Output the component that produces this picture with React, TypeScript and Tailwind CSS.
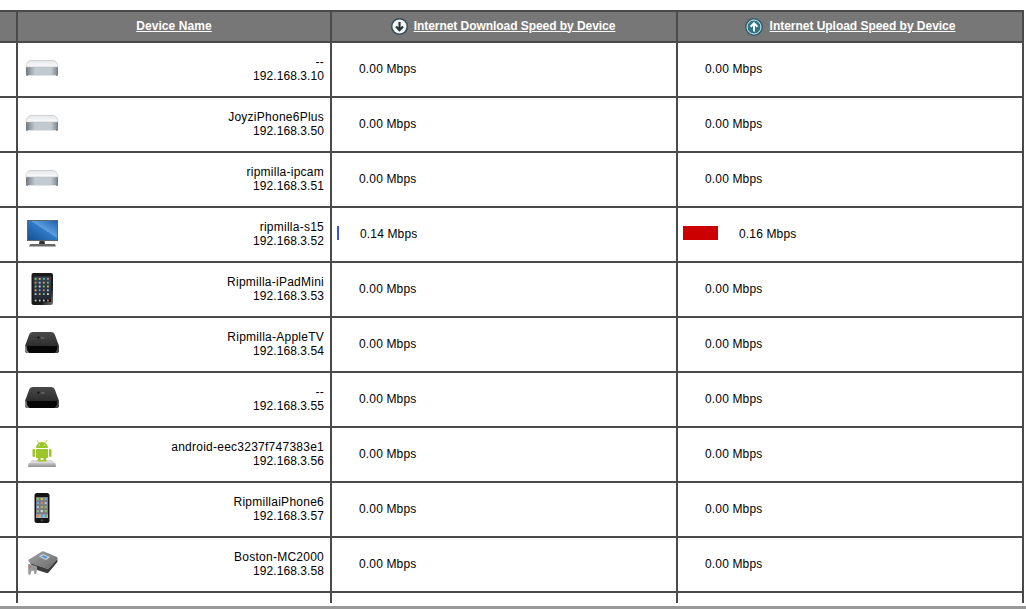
type IconName = "mini" | "monitor" | "ipad" | "appletv" | "android" | "iphone" | "n64";

type Device = {
  icon: IconName;
  name: string;
  ip: string;
  down: string;
  up: string;
  downBar?: boolean;
  upBar?: boolean;
};

const devices: Device[] = [
  { icon: "mini", name: "--", ip: "192.168.3.10", down: "0.00 Mbps", up: "0.00 Mbps" },
  { icon: "mini", name: "JoyziPhone6Plus", ip: "192.168.3.50", down: "0.00 Mbps", up: "0.00 Mbps" },
  { icon: "mini", name: "ripmilla-ipcam", ip: "192.168.3.51", down: "0.00 Mbps", up: "0.00 Mbps" },
  { icon: "monitor", name: "ripmilla-s15", ip: "192.168.3.52", down: "0.14 Mbps", up: "0.16 Mbps", downBar: true, upBar: true },
  { icon: "ipad", name: "Ripmilla-iPadMini", ip: "192.168.3.53", down: "0.00 Mbps", up: "0.00 Mbps" },
  { icon: "appletv", name: "Ripmilla-AppleTV", ip: "192.168.3.54", down: "0.00 Mbps", up: "0.00 Mbps" },
  { icon: "appletv", name: "--", ip: "192.168.3.55", down: "0.00 Mbps", up: "0.00 Mbps" },
  { icon: "android", name: "android-eec3237f747383e1", ip: "192.168.3.56", down: "0.00 Mbps", up: "0.00 Mbps" },
  { icon: "iphone", name: "RipmillaiPhone6", ip: "192.168.3.57", down: "0.00 Mbps", up: "0.00 Mbps" },
  { icon: "n64", name: "Boston-MC2000", ip: "192.168.3.58", down: "0.00 Mbps", up: "0.00 Mbps" },
];

const appDots = ["#7cc45c", "#dcb850", "#6aaae8", "#d8806a", "#9fc8e0", "#c8a860", "#80b880", "#d8d8d8"];

function DeviceIcon({ name }: { name: IconName }) {
  return (
    <svg width="40" height="40" viewBox="0 0 40 40" aria-hidden="true">
      <defs>
        <linearGradient id="miniSide" x1="0" x2="1" y1="0" y2="0">
          <stop offset="0" stopColor="#6f767d" />
          <stop offset="0.12" stopColor="#949ca4" />
          <stop offset="0.28" stopColor="#c2cad1" />
          <stop offset="0.78" stopColor="#c2cad1" />
          <stop offset="0.92" stopColor="#949ca4" />
          <stop offset="1" stopColor="#70777e" />
        </linearGradient>
        <linearGradient id="miniTop" x1="0" x2="0" y1="0" y2="1">
          <stop offset="0" stopColor="#e4e6e9" />
          <stop offset="1" stopColor="#fbfbfc" />
        </linearGradient>
        <linearGradient id="screenBlue" x1="0" x2="1" y1="1" y2="0">
          <stop offset="0" stopColor="#164f92" />
          <stop offset="0.55" stopColor="#2f7cc8" />
          <stop offset="0.56" stopColor="#5d9fdf" />
          <stop offset="1" stopColor="#1f63ad" />
        </linearGradient>
        <linearGradient id="tvTop" x1="0" x2="0" y1="0" y2="1">
          <stop offset="0" stopColor="#4a4a4a" />
          <stop offset="1" stopColor="#1e1e1e" />
        </linearGradient>
        <linearGradient id="padEdge" x1="0" x2="1" y1="0" y2="1">
          <stop offset="0" stopColor="#1a1a1a" />
          <stop offset="0.7" stopColor="#1a1a1a" />
          <stop offset="1" stopColor="#777" />
        </linearGradient>
        <linearGradient id="padScreen" x1="0" x2="0" y1="0" y2="1">
          <stop offset="0" stopColor="#3b4652" />
          <stop offset="1" stopColor="#1d2530" />
        </linearGradient>
        <linearGradient id="dock" x1="0" x2="0" y1="0" y2="1">
          <stop offset="0" stopColor="#c8c8c8" />
          <stop offset="1" stopColor="#8e8e8e" />
        </linearGradient>
        <linearGradient id="n64Top" x1="0" x2="1" y1="0" y2="1">
          <stop offset="0" stopColor="#a4a4a4" />
          <stop offset="1" stopColor="#686868" />
        </linearGradient>
      </defs>

      {name === "mini" && (
        <g>
          <path d="M4 17 L4 24.5 Q4 26 5.5 26 L34.5 26 Q36 26 36 24.5 L36 17 Z" fill="url(#miniSide)" />
          <path d="M4 17 C4.3 13 6 10.5 9 10.5 L31 10.5 C34 10.5 35.7 13 36 17 Z" fill="url(#miniTop)" stroke="#b8bcc0" strokeWidth="0.6" />
          <rect x="6" y="25" width="28" height="1" fill="#dfe2e5" />
        </g>
      )}

      {name === "monitor" && (
        <g>
          <rect x="5" y="5" width="31" height="21" fill="#5c6670" />
          <rect x="6" y="6" width="29" height="19" fill="url(#screenBlue)" />
          <path d="M17.5 26 L22.5 26 L23 29 L17 29 Z" fill="#333" />
          <path d="M8 29 L33 29 L34 31.5 L7 31.5 Z" fill="#6a6a6a" />
        </g>
      )}

      {name === "ipad" && (
        <g>
          <rect x="9.5" y="3" width="21.5" height="32" rx="2" fill="url(#padEdge)" />
          <rect x="11.5" y="6.5" width="17.5" height="25.5" fill="url(#padScreen)" />
          {[0, 1, 2, 3, 4].map((row) =>
            [0, 1, 2, 3].map((col) => (
              <rect key={`${row}-${col}`} x={12.7 + col * 4.1} y={8 + row * 3.8} width="1.8" height="1.8" fill={appDots[(row * 3 + col) % 8]} />
            )),
          )}
          <rect x="11.5" y="29" width="17.5" height="3" fill="#11161c" />
          <rect x="12.7" y="29.6" width="1.8" height="1.8" fill="#ccc" />
          <rect x="16.8" y="29.6" width="1.8" height="1.8" fill="#ccc" />
          <rect x="20.9" y="29.6" width="1.8" height="1.8" fill="#ccc" />
          <rect x="25" y="29.6" width="1.8" height="1.8" fill="#d88030" />
        </g>
      )}

      {name === "appletv" && (
        <g>
          <path d="M3 21 L7 10 Q8 7 11 7 L29 7 Q32 7 33 10 L37 21 L37 25 Q37 28 34 28 L6 28 Q3 28 3 25 Z" fill="url(#tvTop)" />
          <path d="M3 21 L37 21 L37 25 Q37 28 34 28 L6 28 Q3 28 3 25 Z" fill="#060606" />
          <path d="M3 21 L3 25 Q3 28 6 28 L7.5 28 Q4.5 26 4.5 21 Z" fill="#858585" />
          <path d="M35.5 21 Q35.5 26 32.5 28 L34 28 Q37 28 37 25 L37 21 Z" fill="#4a4a4a" />
          <circle cx="16.5" cy="12.5" r="1.1" fill="#0c0c0c" />
          <text x="19" y="14" fontSize="4.2" fontFamily="Liberation Sans, sans-serif" fill="#999">tv</text>
        </g>
      )}

      {name === "android" && (
        <g fill="#9bc52a">
          <path d="M14 13 A6 6 0 0 1 26 13 Z" />
          <rect x="14" y="14" width="12" height="9" rx="1" />
          <rect x="10.5" y="14" width="2.6" height="8" rx="1.3" />
          <rect x="26.9" y="14" width="2.6" height="8" rx="1.3" />
          <rect x="15.8" y="22" width="2.8" height="5" rx="1" />
          <rect x="21.4" y="22" width="2.8" height="5" rx="1" />
          <path d="M16.5 8 L15 5 M23.5 8 L25 5" stroke="#9bc52a" strokeWidth="0.7" />
          <circle cx="17.5" cy="10" r="0.6" fill="#fff" />
          <circle cx="22.5" cy="10" r="0.6" fill="#fff" />
          <path d="M7.5 28 L8.5 26.5 Q9 25 10.5 25 L29.5 25 Q31 25 31.5 26.5 L32.5 28 Z" fill="#dadada" />
          <path d="M6.5 28 L33.5 28 L34 32 L6 32 Z" fill="url(#dock)" />
          <rect x="15.5" y="25" width="9" height="1.5" fill="#9bc52a" />
        </g>
      )}

      {name === "iphone" && (
        <g>
          <rect x="12.5" y="3" width="15" height="30" rx="2.5" fill="#141414" />
          <rect x="14" y="7" width="12" height="21" fill="#787a80" />
          {[0, 1, 2, 3].map((row) =>
            [0, 1, 2].map((col) => (
              <rect key={`${row}-${col}`} x={14.8 + col * 3.9} y={8 + row * 4} width="2.2" height="2.2" fill={appDots[(row * 2 + col) % 8]} />
            )),
          )}
          <rect x="14" y="24.5" width="12" height="3.5" fill="#a8b4c0" />
          <rect x="14.8" y="25" width="2.2" height="2.2" fill="#e08030" />
          <rect x="18.7" y="25" width="2.2" height="2.2" fill="#5a9bd8" />
          <rect x="22.6" y="25" width="2.2" height="2.2" fill="#60b060" />
          <circle cx="20" cy="30.5" r="1.2" fill="#444" />
        </g>
      )}

      {name === "n64" && (
        <g>
          <path d="M6 15 L20 6.5 Q21 6 22 6.4 L35 12 Q36 13 35.4 14 L27 23 Q26 24 24.5 23.5 L8 18 Z" fill="url(#n64Top)" />
          <path d="M8 18 L24.5 23.5 Q26 24 27 23 L35.4 14 L35.4 17 L27 27 Q26 28.5 24.5 28 L12 24 Z" fill="#3a3a3a" />
          <path d="M17 11.5 L21 9 L28 12 L24 15 Z" fill="#d2d6da" />
          <path d="M19 11.5 L21.2 10.2 L26 12 L23.8 13.8 Z" fill="#4a9ae6" />
          <path d="M6 20 Q5 19 7 19 L14 21 Q15.5 21.5 15 23 L14.4 28.5 Q13.4 29.8 12.4 28.8 L11.8 26 L9.7 25.5 L8.3 29.5 Q6.8 30.2 6.2 28.8 Z" fill="#9a9a9a" />
          <circle cx="8" cy="22" r="0.8" fill="#d85050" />
          <circle cx="11.5" cy="23" r="0.8" fill="#50b060" />
        </g>
      )}
    </svg>
  );
}

function DownIcon() {
  return (
    <svg width="17" height="17" viewBox="0 0 17 17" aria-hidden="true">
      <circle cx="8.5" cy="8.5" r="8.5" fill="#2f4d58" />
      <circle cx="8.5" cy="8.5" r="7" fill="#f4f6f6" />
      <path d="M8.5 4 V12 M5 8.6 L8.5 12.2 L12 8.6" fill="none" stroke="#26353c" strokeWidth="2.2" />
    </svg>
  );
}

function UpIcon() {
  return (
    <svg width="18" height="18" viewBox="0 0 18 18" aria-hidden="true">
      <circle cx="9" cy="9" r="9" fill="#2c5f6e" />
      <circle cx="9" cy="9" r="7" fill="#2c7386" stroke="#e8eeee" strokeWidth="1" />
      <path d="M9 13.5 V5.5 M5.6 8.8 L9 5.2 L12.4 8.8" fill="none" stroke="#ffffff" strokeWidth="2" />
    </svg>
  );
}

function SpeedCell({ value, barClass }: { value: string; barClass?: string }) {
  return (
    <div className="flex items-center border-r-2 border-[#4a4a4a] pb-[3px] pl-[5px] tracking-[0.15px]">
      {barClass ? <div className={barClass} /> : <div className="w-px" />}
      <span className="ml-[21px] mt-[2px]">{value}</span>
    </div>
  );
}

function DeviceRow({ device }: { device: Device }) {
  return (
    <div className="grid h-[55px] grid-cols-[18px_314px_346px_346px] border-b-2 border-[#4a4a4a] text-black">
      <div className="border-r-2 border-[#4a4a4a]" />
      <div className="flex border-r-2 border-[#4a4a4a] pr-[6px]">
        <div className="ml-[4px] pt-[7px]">
          <DeviceIcon name={device.icon} />
        </div>
        <div className="flex-1 self-center pb-[2px] text-right leading-[14px]">
          <div className="tracking-[0.25px]">{device.name}</div>
          <div className="tracking-[0.08px]">{device.ip}</div>
        </div>
      </div>
      <SpeedCell value={device.down} barClass={device.downBar ? "h-[14px] w-[2px] bg-[#3355ee]" : undefined} />
      <SpeedCell value={device.up} barClass={device.upBar ? "h-[14px] w-[35px] bg-[#cc0000]" : undefined} />
    </div>
  );
}

export default function App() {
  return (
    <div className="flex h-[609px] w-[1026px] flex-col overflow-hidden bg-white font-['Liberation_Sans',Arial,sans-serif] text-[12px]">
      <div className="h-[603px] w-[1024px] shrink-0 overflow-hidden pt-[10px]">
        <div className="grid h-[33px] grid-cols-[18px_314px_346px_346px] border-y-2 border-[#4a4a4a] bg-[#777] font-bold text-white">
          <div className="border-r-2 border-[#4a4a4a]" />
          <div className="flex items-center justify-center border-r-2 border-[#4a4a4a] pb-[2px] tracking-[0.08px] underline">Device Name</div>
          <div className="flex items-center justify-center gap-[6px] border-r-2 border-[#4a4a4a] pr-[2px] tracking-[-0.05px]">
            <DownIcon />
            <span className="mb-[2px] underline">Internet Download Speed by Device</span>
          </div>
          <div className="flex items-center justify-center gap-[7px] border-r-2 border-[#4a4a4a] tracking-[-0.03px]">
            <UpIcon />
            <span className="mb-[2px] underline">Internet Upload Speed by Device</span>
          </div>
        </div>
        {devices.map((device) => (
          <DeviceRow key={device.ip} device={device} />
        ))}
        <div className="grid h-[55px] grid-cols-[18px_314px_346px_346px]">
          <div className="border-r-2 border-[#4a4a4a]" />
          <div className="border-r-2 border-[#4a4a4a]" />
          <div className="border-r-2 border-[#4a4a4a]" />
          <div className="border-r-2 border-[#4a4a4a]" />
        </div>
      </div>
      <div className="mt-[3px] h-[3px] shrink-0 bg-[#999]" />
    </div>
  );
}
